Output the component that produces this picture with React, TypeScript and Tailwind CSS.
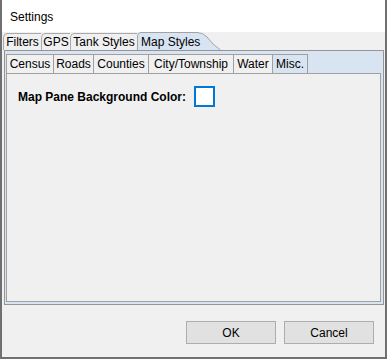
import React from "react";

const font = { fontFamily: '"Liberation Sans", Arial, sans-serif' };

function OuterTab({ label, w }: { label: string; w: string }) {
  return (
    <div
      className={`${w} h-[17px] mt-[1px] flex items-center justify-center border-t border-l border-[#a9a9a9] rounded-tl-[5px] bg-[#f0f0f0] text-[12px] text-black leading-none`}
    >
      {label}
    </div>
  );
}

function SelectedOuterTab() {
  return (
    <div className="relative w-[84px] h-[18px] text-[12px] text-black leading-none">
      <svg className="absolute inset-0" width="84" height="18" viewBox="0 0 84 18">
        <path
          d="M0.5 18 L0.5 4 Q0.5 0.5 4 0.5 L60 0.5 Q66 0.5 70 5 Q76 13 83.5 18"
          fill="#d9e4f2"
          stroke="#a3a3a3"
          strokeWidth="1"
        />
      </svg>
      <div className="relative pl-[4px] pt-[4px]">Map Styles</div>
    </div>
  );
}

function InnerTab({ label, w, selected, last }: { label: string; w: string; selected?: boolean; last?: boolean }) {
  return (
    <div
      className={`${w} h-[19px] flex items-center justify-center border-t border-l ${last ? "border-r" : ""} border-[#a0a0a0] text-[12px] text-black leading-none ${selected ? "bg-[#d9e4f2]" : "bg-[#f0f0f0]"}`}
    >
      {label}
    </div>
  );
}

export default function App() {
  return (
    <div className="w-[388px] h-[360px] bg-white" style={font}>
      <div className="w-[387px] h-[359px] border-x-2 border-b-2 border-[#707070] bg-[#f0f0f0] flex flex-col">
        <div className="h-[32px] bg-white flex items-center pl-[8px] pt-[2px] text-[12px] text-black">Settings</div>
        <div className="flex items-end h-[18px] ml-[1px]">
          <OuterTab label="Filters" w="w-[38px]" />
          <OuterTab label="GPS" w="w-[29px]" />
          <OuterTab label="Tank Styles" w="w-[67px]" />
          <SelectedOuterTab />
        </div>
        <div className="ml-[2px] mr-[1px] h-[255px] border border-[#959595] bg-[#d9e4f2] pt-[3px] pl-[1px] pr-[2px] pb-[2px] flex flex-col">
          <div className="flex">
            <InnerTab label="Census" w="w-[47px]" />
            <InnerTab label="Roads" w="w-[40px]" />
            <InnerTab label="Counties" w="w-[55px]" />
            <InnerTab label="City/Township" w="w-[85px]" />
            <InnerTab label="Water" w="w-[39px]" />
            <InnerTab label="Misc." w="w-[36px]" selected last />
          </div>
          <div className="flex-1 border border-[#a0a0a0] bg-[#f0f0f0] pt-[12px] pl-[11px]">
            <div className="flex items-center">
              <div className="w-[176px] text-[12px] font-bold text-black">Map Pane Background Color:</div>
              <div className="w-[21px] h-[21px] border-2 border-[#0078d7] bg-white" />
            </div>
          </div>
        </div>
        <div className="flex justify-end gap-[8px] pr-[11px] pt-[16px]">
          <button className="w-[90px] h-[23px] bg-[#e1e1e1] border border-[#adadad] text-[12px] text-black">OK</button>
          <button className="w-[90px] h-[23px] bg-[#e1e1e1] border border-[#adadad] text-[12px] text-black">Cancel</button>
        </div>
      </div>
    </div>
  );
}
